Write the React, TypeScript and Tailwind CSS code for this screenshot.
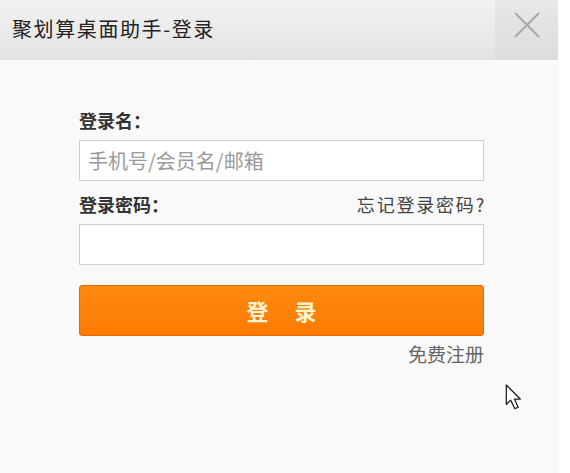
import React from 'react';

const font = { fontFamily: '"Noto Sans CJK SC", "Liberation Sans", sans-serif' };

export default function App() {
  return (
    <div className="w-[570px] h-[473px] bg-white" style={font}>
      <div className="w-[558px] h-[473px] bg-[#f9f9f9] flex flex-col">
        {/* title bar */}
        <div className="h-[60px] flex items-stretch bg-gradient-to-b from-[#f2f2f2] to-[#e3e3e3]">
          <div className="flex-1 flex items-center pl-[12px] pb-[2px] text-[20px] tracking-[1.6px] text-[#222]">
            聚划算桌面助手-登录
          </div>
          <div className="w-[63px] flex items-center justify-center pb-[10px] bg-gradient-to-b from-[#e8e8e8] to-[#dcdcdc]">
            <svg width="30" height="30" viewBox="0 0 30 30">
              <path d="M3 3 L27 27 M27 3 L3 27" stroke="#a8a8a8" strokeWidth="2" fill="none" />
            </svg>
          </div>
        </div>

        {/* form */}
        <div className="ml-[79px] w-[405px] pt-[45px]">
          <div className="text-[18px] font-bold text-[#333] leading-[30px]">登录名：</div>
          <input
            className="mt-[5px] w-full h-[41px] border border-[#cfcfcf] bg-white px-[8px] text-[20px] outline-none placeholder:text-[#9a9a9a]"
            placeholder="手机号/会员名/邮箱"
          />
          <div className="flex justify-between items-center mt-[8px] leading-[30px]">
            <span className="text-[18px] font-bold text-[#333]">登录密码：</span>
            <span className="text-[18px] tracking-[1.8px] text-[#444] -mr-[2px]">忘记登录密码?</span>
          </div>
          <input
            type="password"
            className="mt-[5px] w-full h-[41px] border border-[#cfcfcf] bg-white px-[8px] outline-none"
          />
          <button className="mt-[20px] w-full h-[51px] rounded-[3px] bg-gradient-to-b from-[#ff8a12] to-[#fb7a00] border border-[#e06a00] text-[#fff3d0] text-[22px] font-bold tracking-[26px] pl-[26px]">
            登录
          </button>
          <div className="text-right text-[19px] text-[#666] mt-[4px] leading-[28px]">免费注册</div>
        </div>

        <div className="relative flex-1">
          <svg className="absolute left-[505px] top-[16px]" width="22" height="28" viewBox="0 0 20 26">
            <path d="M1 1 L1 19 L5 15 L9 23 L12 21.5 L8.5 14 L14 14 Z" fill="#fff" stroke="#222" strokeWidth="1.2" strokeLinejoin="round" />
          </svg>
        </div>
      </div>
    </div>
  );
}
